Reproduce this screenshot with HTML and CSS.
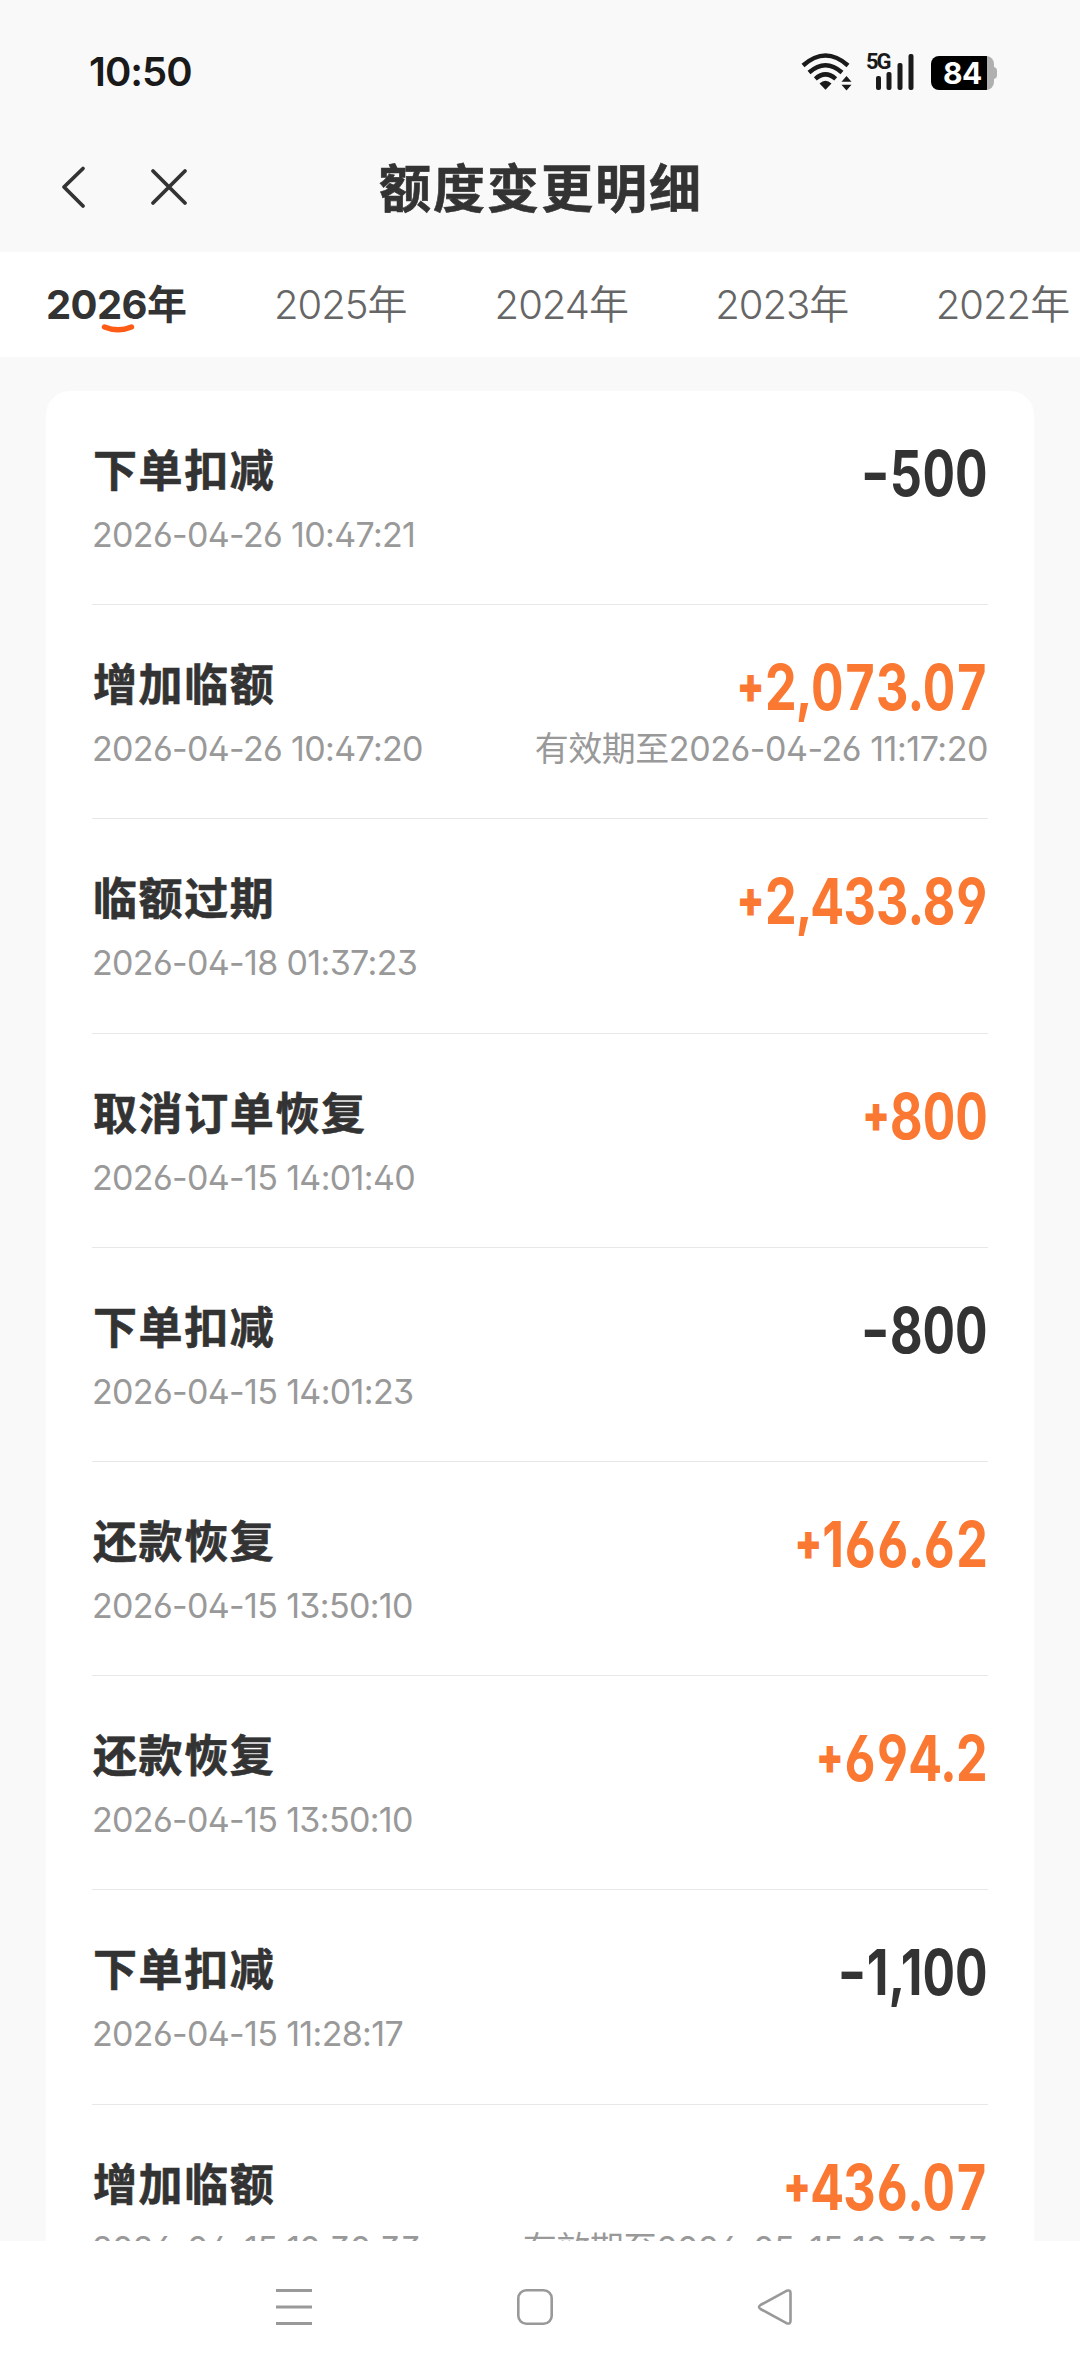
FILE: index.html
```html
<!DOCTYPE html>
<html lang="zh-CN">
<head>
<meta charset="utf-8">
<title>额度变更明细</title>
<link rel="stylesheet" href="styles.css">
</head>
<body>
<div class="screen">
  <div class="status">
    <span class="clock">10:50</span>
    <div class="status-icons">
      <svg class="wifi" width="52" height="38" viewBox="0 0 52 38" fill="none" stroke="#1a1a1a" stroke-width="4.4">
        <path d="M2 12.5Q24.500 -7.500 47 12.500"/>
        <path d="M8 19.500Q24.500 5 41 19.500"/>
        <path d="M14.300 25.800Q24.500 17 34.700 25.800"/>
        <path d="M18.500 30.500Q24.500 25 30.500 30.500L24.500 36.800Z" fill="#1a1a1a" stroke="none"/>
        <path d="M40.500 28.800L45.500 23L50.500 28.800ZM40.500 31.800H50.500L45.500 37.500Z" fill="#1a1a1a" stroke="none"/>
      </svg>
      <div class="signal">
        <span class="net">5G</span>
        <svg width="50" height="38" viewBox="0 0 50 38" fill="#1a1a1a">
          <rect x="10" y="23" width="5" height="14" rx="2"/>
          <rect x="20.500" y="19" width="5" height="18" rx="2"/>
          <rect x="31.500" y="10" width="5" height="27" rx="2"/>
          <rect x="42.500" y="1" width="5" height="36" rx="2"/>
        </svg>
      </div>
      <div class="battery"><span class="level">84</span></div>
    </div>
  </div>

  <header class="header">
    <svg class="back" width="28" height="44" viewBox="0 0 28 44" fill="none" stroke="#333" stroke-width="3.800" stroke-linecap="round" stroke-linejoin="round"><path d="M23 3.500L4 22L23 41"/></svg>
    <svg class="close" width="40" height="40" viewBox="0 0 40 40" fill="none" stroke="#333" stroke-width="3.800" stroke-linecap="round"><path d="M4 4L36 36M36 4L4 36"/></svg>
    <h1 class="title">额度变更明细</h1>
  </header>

  <nav class="tabs">
    <a class="tab active">2026年<svg class="mark" width="36" height="12" viewBox="0 0 36 12" fill="none" stroke="#fc5c16" stroke-width="5.500" stroke-linecap="round"><path d="M4.500 4Q18 9.500 31.500 4"/></svg></a>
    <a class="tab">2025年</a>
    <a class="tab">2024年</a>
    <a class="tab">2023年</a>
    <a class="tab">2022年</a>
  </nav>

  <main class="content">
    <ul class="card">
      <li class="row"><div class="left"><div class="name">下单扣减</div><div class="date">2026-04-26 10:47:21</div></div><div class="right"><div class="amount"><span class="minus">-</span><span class="num">500</span></div></div></li>
      <li class="row"><div class="left"><div class="name">增加临额</div><div class="date">2026-04-26 10:47:20</div></div><div class="right"><div class="amount plus"><span class="sign">+</span><span class="num">2</span><span class="punct">,</span><span class="num">073</span><span class="punct">.</span><span class="num">07</span></div><div class="date note">有效期至2026-04-26 11:17:20</div></div></li>
      <li class="row"><div class="left"><div class="name">临额过期</div><div class="date">2026-04-18 01:37:23</div></div><div class="right"><div class="amount plus"><span class="sign">+</span><span class="num">2</span><span class="punct">,</span><span class="num">433</span><span class="punct">.</span><span class="num">89</span></div></div></li>
      <li class="row"><div class="left"><div class="name">取消订单恢复</div><div class="date">2026-04-15 14:01:40</div></div><div class="right"><div class="amount plus"><span class="sign">+</span><span class="num">800</span></div></div></li>
      <li class="row"><div class="left"><div class="name">下单扣减</div><div class="date">2026-04-15 14:01:23</div></div><div class="right"><div class="amount"><span class="minus">-</span><span class="num">800</span></div></div></li>
      <li class="row"><div class="left"><div class="name">还款恢复</div><div class="date">2026-04-15 13:50:10</div></div><div class="right"><div class="amount plus"><span class="sign">+</span>1<span class="num">66</span><span class="punct">.</span><span class="num">62</span></div></div></li>
      <li class="row"><div class="left"><div class="name">还款恢复</div><div class="date">2026-04-15 13:50:10</div></div><div class="right"><div class="amount plus"><span class="sign">+</span><span class="num">694</span><span class="punct">.</span><span class="num">2</span></div></div></li>
      <li class="row"><div class="left"><div class="name">下单扣减</div><div class="date">2026-04-15 11:28:17</div></div><div class="right"><div class="amount"><span class="minus">-</span>1,1<span class="num">00</span></div></div></li>
      <li class="row"><div class="left"><div class="name">增加临额</div><div class="date">2026-04-15 10:30:33</div></div><div class="right"><div class="amount plus"><span class="sign">+</span><span class="num">436</span><span class="punct">.</span><span class="num">07</span></div><div class="date note">有效期至2026-05-15 10:30:33</div></div></li>
    </ul>
  </main>

  <footer class="navbar">
    <svg width="36" height="38" viewBox="0 0 36 38" stroke="#999" stroke-width="3"><path d="M0 2.500H36M0 19H36M0 35.500H36"/></svg>
    <svg width="36" height="38" viewBox="0 0 36 38" fill="none" stroke="#999" stroke-width="2.600"><rect x="1.300" y="2.300" width="33.400" height="33.400" rx="8"/></svg>
    <svg width="36" height="38" viewBox="0 0 36 38" fill="none" stroke="#999" stroke-width="2.600" stroke-linejoin="round"><path d="M3.500 17Q0.500 19 3.500 21L29.500 35.200Q33.500 36.500 33.500 33V5Q33.500 1.500 29.500 2.800Z"/></svg>
  </footer>
</div>
</body>
</html>
```
FILE: styles.css
```css
* { box-sizing: border-box; }

body {
  margin: 0;
  background: #f9f9f9;
  color: #333;
  font-family: Inter, "Noto Sans CJK SC", sans-serif;
}

.screen {
  width: 1080px;
  height: 2373px;
  display: flex;
  flex-direction: column;
  overflow: hidden;
}

.status {
  flex: none;
  height: 122px;
  padding: 22px 83px 0 89px;
  display: flex;
  justify-content: space-between;
  align-items: center;
}

.clock {
  font-size: 40px;
  font-weight: 600;
  letter-spacing: -1px;
  line-height: 48px;
  color: #1a1a1a;
}

.status-icons { display: flex; align-items: center; }
.signal { position: relative; margin-left: 13px; height: 38px; }
.net {
  position: absolute;
  left: 0;
  top: -2px;
  font: 700 22px/21px Roboto, sans-serif;
  letter-spacing: -2px;
  color: #1a1a1a;
}

.battery {
  position: relative;
  width: 63px;
  height: 34px;
  margin: 2px 3px 0 15px;
  border-radius: 8px;
  background: linear-gradient(90deg, #000 56px, #b0b0b0 56px);
  display: flex;
  justify-content: center;
}
.battery::after {
  content: "";
  position: absolute;
  left: 62px;
  top: 11px;
  width: 4px;
  height: 12px;
  border-radius: 0 4px 4px 0;
  background: #b0b0b0;
}
.level { color: #fff; font-weight: 700; font-size: 30px; line-height: 35px; letter-spacing: -.5px; }

.header {
  flex: none;
  height: 130px;
  display: grid;
  grid-template-columns: 60px 91px 229px 1fr;
  align-items: center;
}
.back { grid-column: 2; }
.close { grid-column: 3; margin-left: -2px; }
.title {
  grid-column: 4;
  margin: 5px 0 0 -1px;
  font-size: 52px;
  font-weight: 700;
  line-height: 76px;
  letter-spacing: 2px;
  -webkit-text-stroke: .6px #333;
}

.tabs {
  flex: none;
  height: 105px;
  padding-left: 46px;
  display: flex;
  overflow: hidden;
  background: #fff;
}
.tab {
  position: relative;
  flex: none;
  width: 220.600px;
  font-size: 40px;
  font-weight: 350;
  letter-spacing: -1px;
  line-height: 105px;
  color: #666;
  white-space: nowrap;
}
.active { width: 228px; font-weight: 700; letter-spacing: -.6px; color: #333; }
.mark { position: absolute; left: 54px; top: 71px; }

.content { flex: 1; min-height: 0; overflow: hidden; padding: 34px 46px 0; }
.card {
  margin: 0;
  padding: 0 46px;
  list-style: none;
  background: #fff;
  border-radius: 24px 24px 0 0;
}
.row {
  height: 214.200px;
  padding-top: 49px;
  display: flex;
  justify-content: space-between;
  border-bottom: 1px solid #e8e8e8;
}
.right { display: flex; flex-direction: column; align-items: flex-end; }
.name {
  height: 71px;
  padding-left: 1px;
  font-size: 44px;
  font-weight: 700;
  line-height: 63px;
  letter-spacing: 1.600px;
  -webkit-text-stroke: .6px #333;
}
.date {
  font-size: 34px;
  font-weight: 400;
  line-height: 48px;
  letter-spacing: -.66px;
  color: #999;
  white-space: nowrap;
  font-feature-settings: "ss01";
}
.note { letter-spacing: -.45px; }
.amount {
  height: 71px;
  font-size: 63px;
  font-weight: 700;
  line-height: 66px;
  transform: scaleX(.8);
  transform-origin: right center;
  white-space: nowrap;
  font-feature-settings: "cv03", "cv04";
}
.num { font-feature-settings: "tnum", "cv03", "cv04"; }
.punct { margin: 0 -1.800px; }
.plus { color: #fa7832; }
.sign { font-size: 50px; font-weight: 900; vertical-align: 7px; line-height: 1; }
.minus { display: inline-block; transform: translateY(-1px) scaleX(1.250); transform-origin: right center; line-height: 1; }

.navbar {
  flex: none;
  height: 132px;
  padding: 47px 287px 0 276px;
  display: flex;
  justify-content: space-between;
  background: #fff;
}
```
